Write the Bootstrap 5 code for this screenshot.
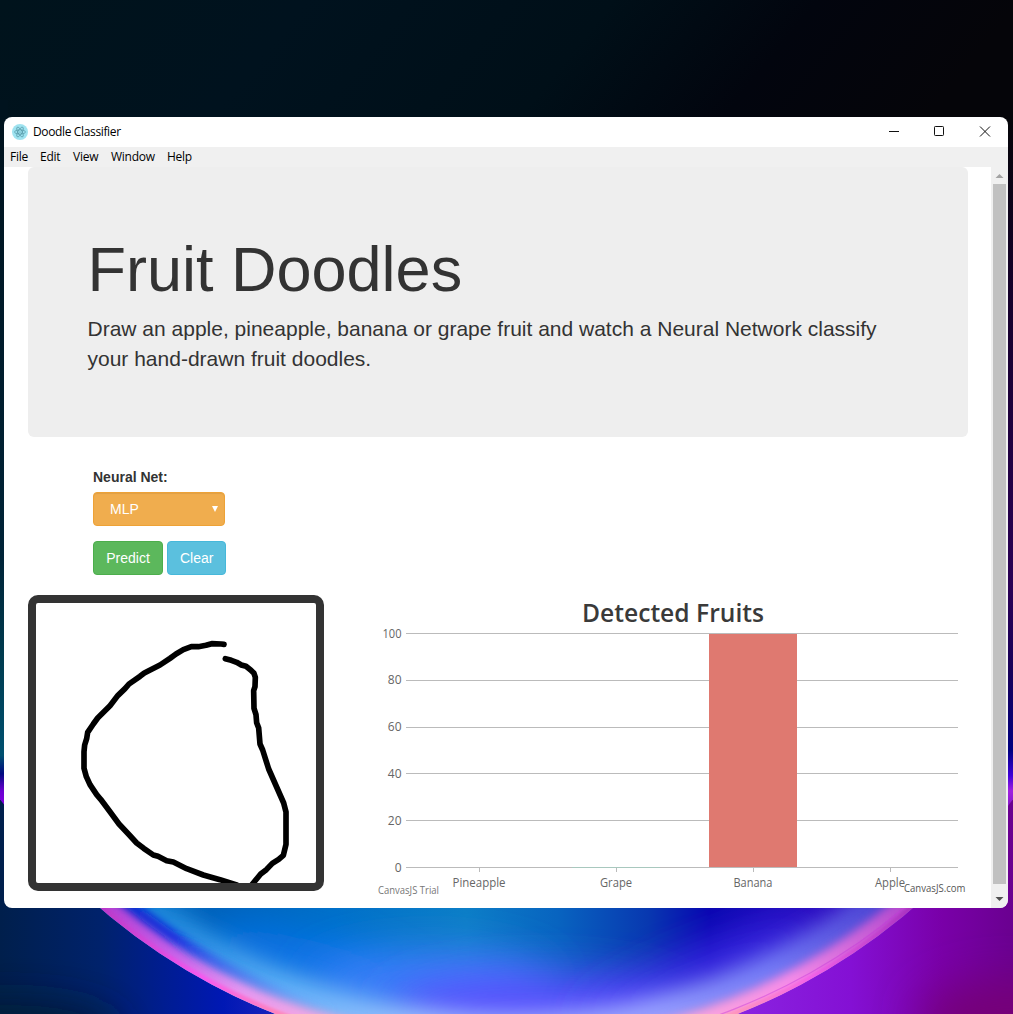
<!DOCTYPE html>
<html lang="en">
<head>
<meta charset="utf-8">
<meta name="viewport" content="width=device-width, initial-scale=1">
<title>Doodle Classifier</title>
<link rel="stylesheet" href="https://cdn.jsdelivr.net/npm/bootstrap@5.3.0/dist/css/bootstrap.min.css">
<style>
body{width:1013px;height:1014px;background:#00121e;font:14px/20px "Liberation Sans",Arial,sans-serif;color:#333}
.wallpaper{position:absolute;inset:0;z-index:-1}
.desktop{padding:117px 5px 106px 4px;height:1014px}
.app-window{height:791px;border-radius:8px;background:#fff}
.title-bar{height:30px;padding-left:8px;font:12px/30px "Open Sans","Noto Sans",sans-serif;color:#000}
.app-name{letter-spacing:-.36px;margin-left:5px}
.menu-bar{height:20px;background:#f0f0f0;font:12px/20px "Open Sans","Noto Sans",sans-serif;color:#000;padding-left:6px}
.menu-bar span{flex:none;white-space:nowrap;letter-spacing:-.25px}
.viewport{height:741px}
.page{width:987px;padding:0 23px 0 24px}
.hero{height:270px;background:#eee;border-radius:6px;padding:68px 60px 0 59.5px}
.hero h1{font-size:63px;line-height:69.3px;font-weight:400;margin:0 0 10px;color:#333}
.hero p{font-size:21px;line-height:30px;margin:0}
.controls{padding:30px 0 20px 65px}
.controls label{display:block;font-weight:700;margin-bottom:5px}
.net-select{width:132px;height:34px;background:#f0ad4e;border:1px solid #eea236;border-radius:4px;color:#fff;padding:0 5px 0 16px;box-shadow:inset 0 1px 1px rgba(0,0,0,.075);margin-bottom:15px}
.controls .btn{--bs-btn-font-size:14px;--bs-btn-line-height:20px;--bs-btn-padding-y:6px;--bs-btn-padding-x:12px;--bs-btn-border-radius:4px;--bs-btn-color:#fff;height:34px}
.btn-predict{--bs-btn-bg:#5cb85c;--bs-btn-border-color:#4cae4c;width:70px}
.btn-clear{--bs-btn-bg:#5bc0de;--bs-btn-border-color:#46b8da;width:59px}
.doodle{width:296px;height:296px;border:8px solid #333;border-radius:10px;flex:none}
.chart{flex:none;margin-left:44px;font-family:"Open Sans","Noto Sans",sans-serif}
.scrollbar{width:17px;background:#f0f0f0;border-bottom-right-radius:8px}
.thumb{width:13px;height:700px;background:#c1c1c1}
</style>
<script src="https://cdn.jsdelivr.net/npm/bootstrap@5.3.0/dist/js/bootstrap.bundle.min.js"></script>
</head>
<body class="overflow-hidden position-relative">
<svg class="wallpaper" width="1013" height="1014" viewBox="0 0 1013 1014">
  <defs>
    <linearGradient id="sky" x1="0" y1="0" x2="1" y2=".1"><stop offset="0" stop-color="#00131c"/><stop offset=".3" stop-color="#00121e"/><stop offset=".6" stop-color="#000f18"/><stop offset=".8" stop-color="#02050e"/><stop offset="1" stop-color="#050509"/></linearGradient>
    <linearGradient id="sideL" gradientUnits="userSpaceOnUse" x1="0" y1="0" x2="0" y2="1014"><stop offset=".12" stop-color="#00131e"/><stop offset=".55" stop-color="#002438"/><stop offset=".65" stop-color="#003c50"/><stop offset=".745" stop-color="#005070"/><stop offset=".763" stop-color="#000a80"/><stop offset=".78" stop-color="#6a00d0"/><stop offset=".793" stop-color="#8000e0"/></linearGradient>
    <linearGradient id="sideR" gradientUnits="userSpaceOnUse" x1="0" y1="0" x2="0" y2="1014"><stop offset=".12" stop-color="#050509"/><stop offset=".3" stop-color="#16002c"/><stop offset=".58" stop-color="#2a0055"/><stop offset=".66" stop-color="#180058"/><stop offset=".74" stop-color="#000080"/><stop offset=".765" stop-color="#4000d8"/><stop offset=".78" stop-color="#a020e0"/><stop offset=".795" stop-color="#8818c8"/></linearGradient>
    <linearGradient id="ground" gradientUnits="userSpaceOnUse" x1="0" x2="1013"><stop offset="0" stop-color="#001f4c"/><stop offset=".1" stop-color="#00226c"/><stop offset=".22" stop-color="#0018b4"/><stop offset=".3" stop-color="#2828c0"/><stop offset=".7" stop-color="#8c28e4"/><stop offset=".84" stop-color="#8410d4"/><stop offset=".93" stop-color="#7900a8"/><stop offset="1" stop-color="#6a0090"/></linearGradient>
    <linearGradient id="core" gradientUnits="userSpaceOnUse" x1="0" y1="0" x2="1013" y2="0"><stop offset=".12" stop-color="#0a74c8"/><stop offset=".21" stop-color="#0060b6"/><stop offset=".33" stop-color="#0070c8"/><stop offset=".46" stop-color="#0c7ec6"/><stop offset=".55" stop-color="#0864c0"/><stop offset=".64" stop-color="#0838b0"/><stop offset=".7" stop-color="#0806b0"/><stop offset=".82" stop-color="#2a08bc"/><stop offset=".9" stop-color="#5040d0"/></linearGradient>
    <linearGradient id="halo" gradientUnits="userSpaceOnUse" x1="0" x2="1013"><stop offset=".12" stop-color="#0c80d4"/><stop offset=".2" stop-color="#3498e8"/><stop offset=".28" stop-color="#64b4fa"/><stop offset=".42" stop-color="#a6c4ff"/><stop offset=".52" stop-color="#a8b8ff"/><stop offset=".65" stop-color="#98a0ff"/><stop offset=".76" stop-color="#7880f8"/><stop offset=".88" stop-color="#4840d0"/></linearGradient>
    <linearGradient id="rim" gradientUnits="userSpaceOnUse" x1="0" x2="1013"><stop offset=".1" stop-color="#b43cd0"/><stop offset=".17" stop-color="#c860e8"/><stop offset=".24" stop-color="#e898f0"/><stop offset=".34" stop-color="#fab0dc"/><stop offset=".5" stop-color="#f0c8f8"/><stop offset=".68" stop-color="#fba8dc"/><stop offset=".78" stop-color="#f68ce8"/><stop offset=".9" stop-color="#b044cc"/></linearGradient>
    <linearGradient id="streak" gradientUnits="userSpaceOnUse" x1="0" x2="1013"><stop offset=".11" stop-color="#0404c8"/><stop offset=".17" stop-color="#0a10dc"/><stop offset=".21" stop-color="#3048ec" stop-opacity=".8"/><stop offset=".33" stop-color="#7890f8" stop-opacity="0"/></linearGradient>
    <linearGradient id="edge" gradientUnits="userSpaceOnUse" x1="0" x2="1013"><stop offset=".1" stop-color="#b838c8"/><stop offset=".2" stop-color="#f858f0"/><stop offset=".28" stop-color="#ff88b8"/><stop offset=".72" stop-color="#ff98b8"/><stop offset=".8" stop-color="#f460e8"/><stop offset=".9" stop-color="#a830c0"/></linearGradient>
    <filter id="b2"><feGaussianBlur stdDeviation="1.5"/></filter>
    <filter id="b5"><feGaussianBlur stdDeviation="5"/></filter>
    <filter id="b12" filterUnits="userSpaceOnUse" x="-200" y="-300" width="1500" height="1600"><feGaussianBlur stdDeviation="11"/></filter>
    <filter id="b25" filterUnits="userSpaceOnUse" x="-200" y="700" width="1500" height="600"><feGaussianBlur stdDeviation="22"/></filter>
    <clipPath id="disc"><circle cx="506.500" cy="434" r="624.4"/></clipPath>
    <clipPath id="low"><path d="M0 860H1013V1014H0z"/></clipPath>
    <clipPath id="lowRight"><path d="M700 860H1013V1014H700z"/></clipPath>
  </defs>
  <path d="M0 0H1013V125H0z" fill="url(#sky)"/>
  <path d="M0 780H1013V1014H0z" fill="url(#ground)"/>
  <ellipse cx="10" cy="1035" rx="110" ry="30" fill="#001c34" filter="url(#b25)"/>
  <ellipse cx="1010" cy="1020" rx="90" ry="40" fill="#760078" filter="url(#b25)"/>
  <g clip-path="url(#disc)">
    <path d="M0 100H8V880H0z" fill="url(#sideL)"/>
    <path d="M1004 100H1013V880H1004z" fill="url(#sideR)"/>
    <g clip-path="url(#low)">
      <path d="M0 860H1013V1014H0z" fill="url(#core)"/>
      <ellipse cx="310" cy="962" rx="110" ry="22" fill="#0c74f0" transform="rotate(14 310 962)" filter="url(#b25)"/>
      <ellipse cx="430" cy="985" rx="120" ry="34" fill="#3c80fa" filter="url(#b25)"/>
      <ellipse cx="540" cy="1010" rx="150" ry="36" fill="#5c50ff" filter="url(#b25)"/>
      <ellipse cx="700" cy="973" rx="130" ry="18" fill="#4a34f4" transform="rotate(-22 700 973)" filter="url(#b25)"/>
      <circle cx="506.500" cy="434" r="600" fill="none" stroke="url(#halo)" stroke-width="38" filter="url(#b12)"/>
      <circle cx="506.500" cy="434" r="620" fill="none" stroke="url(#rim)" stroke-width="27" filter="url(#b5)"/>
      <circle cx="506.500" cy="434" r="603" fill="none" stroke="url(#streak)" stroke-width="9" filter="url(#b5)"/>
      <circle cx="506.500" cy="434" r="623" fill="none" stroke="url(#edge)" stroke-width="6" filter="url(#b2)"/>
      <circle cx="506.500" cy="434" r="618.500" fill="none" stroke="#c638dc" stroke-width="1.200" opacity=".45" clip-path="url(#lowRight)"/>
    </g>
  </g>
</svg>
<div class="desktop">
  <main class="app-window d-flex flex-column overflow-hidden">
    <header class="title-bar d-flex align-items-center">
      <svg width="16" height="16" viewBox="0 0 16 16"><circle cx="8" cy="8" r="8" fill="#9fe3f0"/><g fill="none" stroke="#4a8c9a" stroke-width=".6"><ellipse cx="8" cy="8" rx="5.500" ry="2.100"/><ellipse cx="8" cy="8" rx="5.500" ry="2.100" transform="rotate(60 8 8)"/><ellipse cx="8" cy="8" rx="5.500" ry="2.100" transform="rotate(120 8 8)"/></g><circle cx="8" cy="8" r=".6" fill="#39808e"/></svg>
      <span class="app-name">Doodle Classifier</span>
      <svg class="ms-auto" width="120" height="30" viewBox="0 0 120 30" fill="none" stroke="#111"><path d="M1 14.500h10"/><rect x="46.500" y="9.500" width="9" height="9" rx=".8"/><path d="M92 9.500l10 10M102 9.500l-10 10"/></svg>
    </header>
    <nav class="menu-bar d-flex">
      <span style="width:30px">File</span><span style="width:33px">Edit</span><span style="width:38px">View</span><span style="width:56px">Window</span><span>Help</span>
    </nav>
    <div class="viewport d-flex">
      <div class="page">
        <section class="hero">
          <h1>Fruit Doodles</h1>
          <p>Draw an apple, pineapple, banana or grape fruit and watch a Neural Network classify your hand-drawn fruit doodles.</p>
        </section>
        <section class="controls">
          <label>Neural Net:</label>
          <div class="net-select d-flex align-items-center justify-content-between" role="button"><span>MLP</span><svg width="8" height="8" viewBox="0 0 8 8"><path d="M1 1h6L4 7z" fill="#fff"/></svg></div>
          <div class="d-flex gap-1"><button class="btn btn-predict">Predict</button><button class="btn btn-clear">Clear</button></div>
        </section>
        <section class="d-flex">
          <div class="doodle"><svg class="d-block" width="280" height="280" viewBox="48 39 840 840"><path d="M612 163L604 162L575 161L558 166L535 170L514 170L490 179L468 192L450 205L420 225L373 249L360 259L327 282L315 296L294 316L270 347L233 384L220 402L203 427L200 446L194 465L192 485V535L199 560L210 584L230 614L242 628L270 665L297 702L328 735L350 759L371 775L400 795L414 799L440 812L460 816L500 836L550 855L600 869L650 885M616 206L634 211L650 217L664 225L678 229L692 240L702 250L706 262L705 290L701 302L702 355L708 374L710 398L716 414L720 462L728 480L746 537L791 639L798 666V763L790 796L776 808L757 820L739 839L722 852L695 885" fill="none" stroke="#000" stroke-width="17" stroke-linecap="round" stroke-linejoin="round"/></svg></div>
          <svg class="chart" width="600" height="304" viewBox="368 595 600 304">
            <g stroke="#bbb" stroke-width="1"><path d="M406 633.500H958M406 680.500H958M406 727.500H958M406 773.500H958M406 820.500H958M406 867.500H958M479.500 868V872M616.500 868V872M753.500 868V872M890.500 868V872"/></g>
            <path d="M572 867.500H660" stroke="#a8c8be"/>
            <path d="M709 634H797V867H709z" fill="#df7970"/>
            <text x="582" y="622" font-size="24.500" font-weight="600" fill="#3a3a3a" textLength="182" lengthAdjust="spacingAndGlyphs">Detected Fruits</text>
            <g font-size="12" fill="#666" text-anchor="end"><text x="401.500" y="638" textLength="19" lengthAdjust="spacingAndGlyphs">100</text><text x="401.500" y="684">80</text><text x="401.500" y="731">60</text><text x="401.500" y="778">40</text><text x="401.500" y="825">20</text><text x="401.500" y="872">0</text></g>
            <g font-size="12" fill="#666"><text x="452.500" y="887" textLength="53" lengthAdjust="spacingAndGlyphs">Pineapple</text><text x="600" y="887" textLength="32" lengthAdjust="spacingAndGlyphs">Grape</text><text x="733.500" y="887" textLength="39" lengthAdjust="spacingAndGlyphs">Banana</text><text x="875" y="887" textLength="30" lengthAdjust="spacingAndGlyphs">Apple</text></g>
            <g font-size="10" fill="#777"><text x="378" y="894" textLength="61" lengthAdjust="spacingAndGlyphs">CanvasJS Trial</text><text x="904" y="892" fill="#555" textLength="61.500" lengthAdjust="spacingAndGlyphs">CanvasJS.com</text></g>
          </svg>
        </section>
      </div>
      <div class="scrollbar d-flex flex-column align-items-center">
        <svg width="17" height="17"><path d="M4.500 11L8.500 7L12.500 11z" fill="#a3a3a3"/></svg>
        <div class="thumb"></div>
        <svg width="17" height="24"><path d="M4.500 13L8.500 17L12.500 13z" fill="#505050"/></svg>
      </div>
    </div>
  </main>
</div>
</body>
</html>
